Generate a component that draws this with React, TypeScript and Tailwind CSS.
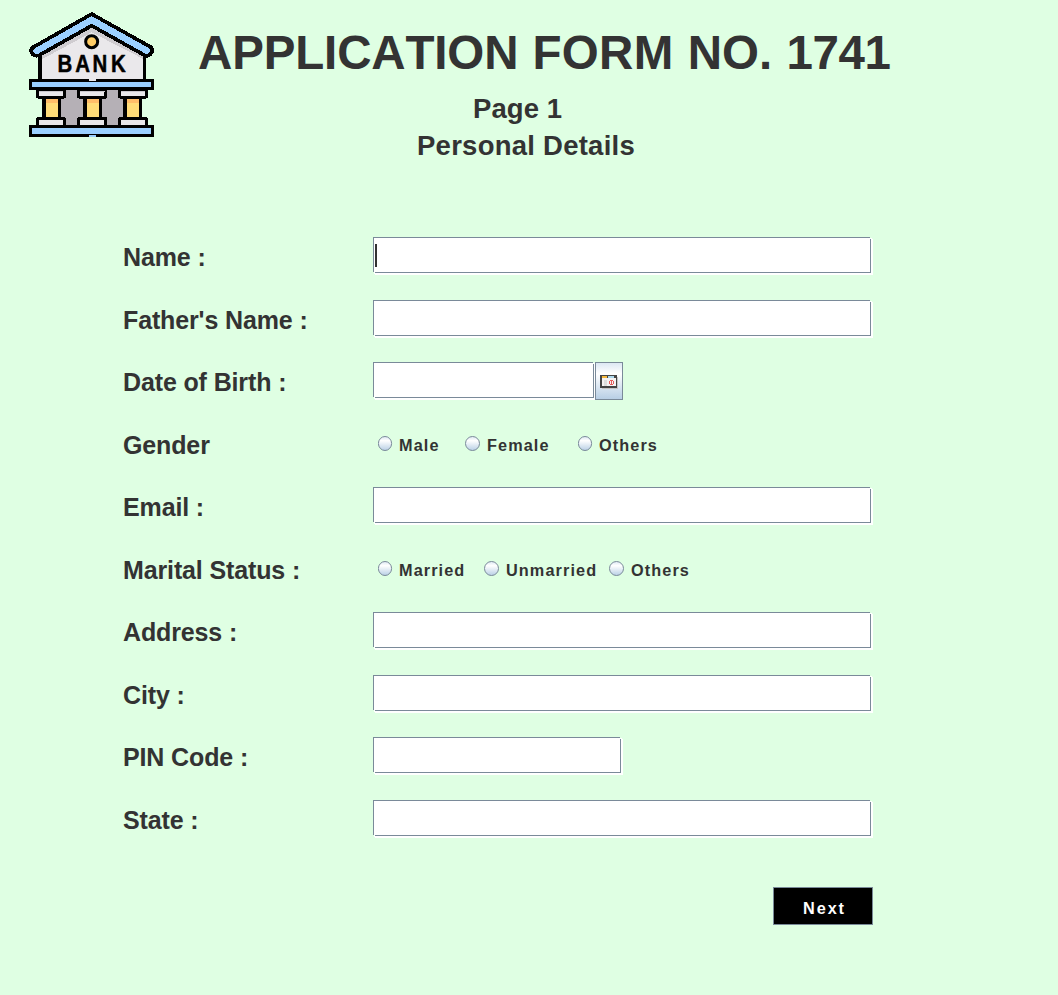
import React from "react";

function BankLogo() {
  return (
    <svg className="block h-[140px] w-[145px]" viewBox="0 0 435 420" stroke="#000" strokeWidth="9" strokeLinejoin="round" strokeLinecap="round" shapeRendering="crispEdges">
      <path d="M60 150 L215 62 L373 150 V225 H60 Z" fill="#eae8eb" stroke="none" />
      <path d="M64 150 L215 66 L370 150 V162 L215 82 L64 164 Z" fill="#cfccd0" stroke="none" />
      <path d="M60 150 V224 M373 150 V224" strokeWidth="11" fill="none" />
      <path d="M215 27 L392 126 Q400 135 394 144 Q386 156 374 151 L215 62 L57 151 Q43 155 36 145 Q30 133 39 127 Z" fill="#9bcfff" strokeWidth="11" />
      <circle cx="215" cy="110" r="18" fill="#fc6" strokeWidth="9" shapeRendering="auto" />
      <text x="132 195 256 321" y="202" transform="scale(.85 1)" fontSize="72" fontWeight="700" fontFamily="'Liberation Sans', sans-serif" fill="#000" stroke="#000" strokeWidth="1.5">BANK</text>
      <path d="M120 254 H310 V364 H120 Z" fill="#b5b0b6" stroke="none" />
      <g>
        <path d="M71 276 H118 V340 H71 Z M194 276 H241 V340 H194 Z M314 276 H361 V340 H314 Z" fill="#ffdc78" strokeWidth="11" />
        <path d="M77 283 H113 V294 H77 Z M200 283 H236 V294 H200 Z M320 283 H356 V294 H320 Z" fill="#ffbd69" stroke="none" />
        <path d="M53 254 H133 V276 H53 Z M176 254 H257 V276 H176 Z M299 254 H379 V276 H299 Z M53 341 H133 V364 H53 Z M176 341 H257 V364 H176 Z M299 341 H379 V364 H299 Z" fill="#e9e7ea" />
        <path d="M58 260 H128 M181 260 H252 M304 260 H374" stroke="#cbc8ce" strokeWidth="4" />
      </g>
      <path d="M32 227 H397 V251 H32 Z M32 365 H397 V391 H32 Z" fill="#9bcfff" strokeWidth="10" />
      <path d="M207 224 H228" stroke="#eae8eb" strokeWidth="7" strokeLinecap="butt" />
      <path d="M207 392 H228" stroke="#9bcfff" strokeWidth="7" strokeLinecap="butt" />
    </svg>
  );
}

function Field({ className, focused = false }: { className: string; focused?: boolean }) {
  return (
    <div
      className={`relative h-9 border border-[#7a8a99] bg-white pl-px pt-1.5 shadow-[1px_1px_0_#fff,2px_2px_0_#fff] before:absolute before:-bottom-px before:-left-px before:h-px before:w-px before:bg-[#dfffe3] before:shadow-[1px_0_0_#fff] after:absolute after:-right-px after:-top-px after:h-px after:w-px after:bg-[#dfffe3] after:shadow-[0_1px_0_#fff] ${className}`}
    >
      {focused && <div className="h-[23px] w-0.5 bg-[#333]" />}
    </div>
  );
}

function Option({ label, className = "", wide = false }: { label: string; className?: string; wide?: boolean }) {
  return (
    <label className={`flex items-start ${className}`}>
      <svg className={`mt-[11px] h-4 shrink-0 ${wide ? "w-4" : "w-[15px]"}`} viewBox={wide ? "0 0 16 16" : "0 0 15 16"}>
        <defs>
          <linearGradient id="radio" x1="0" y1="0" x2="0" y2="1">
            <stop offset="0" stopColor="#dde8f3" />
            <stop offset=".3" stopColor="#fff" />
            <stop offset="1" stopColor="#b8cfe5" />
          </linearGradient>
        </defs>
        <ellipse cx={wide ? 7.5 : 7} cy="7.5" rx={wide ? 7 : 6.6} ry="7" fill="url(#radio)" stroke="#7a8a99" />
      </svg>
      <span className="ml-1.5 mt-2.5 whitespace-nowrap text-[16.25px] leading-5 tracking-[1.1px]">{label}</span>
    </label>
  );
}

function DateButton() {
  return (
    <button className="relative ml-px flex h-[38px] w-7 items-center justify-center border border-[#7a8a99] bg-linear-to-b from-[#dde8f3] via-white via-30% to-[#b8cfe5]">
      <svg className="h-4 w-[18px]" viewBox="0 0 18 16" shapeRendering="crispEdges">
        <path d="M2 4h16v12H2z" fill="#c5c3c3" />
        <path d="M0 2h17v13H0z" fill="#444" />
        <path d="M2 5h14v8H2z" fill="#f4f2f2" />
        <path d="M2 3h5v2H2z" fill="#f5b83d" />
        <path d="M8 3h6v2H8z" fill="#add8ee" />
        <path d="M4 7h3v6H4z" fill="#ddd" />
        <path d="M10 7h3v1h-3zM10 11h3v1h-3zM9 8h1v3H9zM13 8h1v3h-1zM11 8h1v3h-1z" fill="#e65b5b" />
      </svg>
    </button>
  );
}

function Row({ label, children }: { label: string; children: React.ReactNode }) {
  return (
    <div className="flex odd:h-[63px] even:h-[62px]">
      <div className="mt-1.5 w-[250px] shrink-0 text-[25px] leading-7 tracking-[-0.13px]">{label}</div>
      <div className="flex items-start">{children}</div>
    </div>
  );
}

export default function App() {
  return (
    <main className="h-[995px] w-[1058px] overflow-hidden bg-[#dfffe3] font-['Liberation_Sans',Arial,sans-serif] font-bold text-[#333]">
      <header className="flex h-[237px] pl-5 pt-[5px]">
        <BankLogo />
        <div className="ml-[33px] whitespace-nowrap">
          <h1 className="mt-[21px] text-[47.5px] leading-[54px] [font-kerning:none]">
            <span className="tracking-[-0.15px]">APPLICATION</span>{" "}
            <span className="ml-px tracking-[0.3px]">FORM</span>{" "}
            <span className="ml-px">NO.</span>{" "}
            <span className="ml-px tracking-[-0.4px]">1741</span>
          </h1>
          <h2 className="ml-[275px] mt-[13px] text-[27.5px] leading-8 tracking-[0.1px]">Page 1</h2>
          <h2 className="ml-[219px] mt-[5px] text-[27.5px] leading-8 tracking-[0.25px]">Personal Details</h2>
        </div>
      </header>
      <form className="pl-[123px]" onSubmit={(e) => e.preventDefault()}>
        <Row label="Name :"><Field className="w-[498px]" focused /></Row>
        <Row label="Father's Name :"><Field className="w-[498px]" /></Row>
        <Row label="Date of Birth :">
          <Field className="w-[221px]" />
          <DateButton />
        </Row>
        <Row label="Gender">
          <Option label="Male" className="ml-[5px] w-[87px]" />
          <Option label="Female" className="w-[113px]" wide />
          <Option label="Others" />
        </Row>
        <Row label="Email :"><Field className="w-[498px]" /></Row>
        <Row label="Marital Status :">
          <Option label="Married" className="ml-[5px] w-[106px]" />
          <Option label="Unmarried" className="w-[125px]" wide />
          <Option label="Others" wide />
        </Row>
        <Row label="Address :"><Field className="w-[498px]" /></Row>
        <Row label="City :"><Field className="w-[498px]" /></Row>
        <Row label="PIN Code :"><Field className="w-[248px]" /></Row>
        <Row label="State :"><Field className="w-[498px]" /></Row>
        <button className="ml-[650px] mt-[25px] flex h-[38px] w-[100px] items-center justify-center border border-[#7a8a99] bg-black pl-[3px] pt-1 text-[16.25px] tracking-[1.9px] text-white">
          Next
        </button>
      </form>
    </main>
  );
}
